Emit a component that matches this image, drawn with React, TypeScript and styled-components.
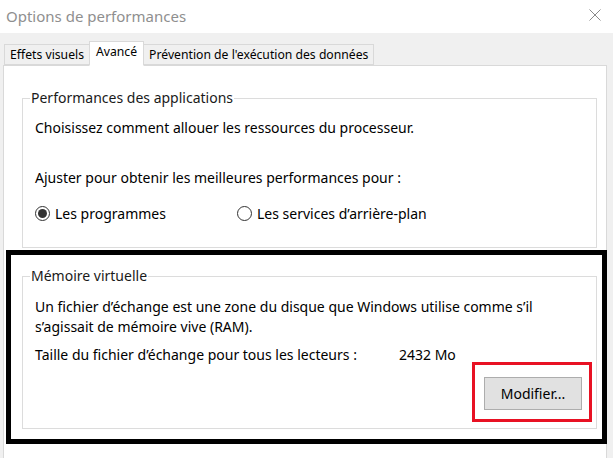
import React from 'react'
import styled, { createGlobalStyle } from 'styled-components'

const GlobalStyle = createGlobalStyle`
  html, body {
    margin: 0;
    padding: 0;
    background: #f0f0f0;
    overflow: hidden;
  }
  body {
    font-family: 'Noto Sans', 'Open Sans', sans-serif;
  }
`

const Window = styled.div`
  width: 613px;
  height: 458px;
  background: #f0f0f0;
  overflow: hidden;
`

const TitleBar = styled.div`
  height: 33px;
  background: #ffffff;
  display: flex;
  align-items: center;
  justify-content: space-between;
  padding: 0 12px 0 6px;
  box-sizing: border-box;
`

const Title = styled.span`
  font-size: 15px;
  color: #8f8f8f;
  margin-top: -2px;
`

const CloseButton = styled.span`
  display: flex;
  width: 12px;
  height: 12px;
  margin-top: -3px;
`

const Body = styled.div`
  padding: 8px 6px 0 3px;
`

const TabRow = styled.div`
  display: flex;
  align-items: flex-end;
  padding-left: 2px;
  height: 24px;
  position: relative;
  z-index: 1;
`

const Tab = styled.div<{ $active?: boolean }>`
  font-size: 12.2px;
  color: #000;
  background: ${({ $active }) => ($active ? '#ffffff' : '#f0f0f0')};
  border: 1px solid #d9d9d9;
  border-bottom: ${({ $active }) => ($active ? '1px solid #ffffff' : '1px solid #d9d9d9')};
  margin-left: -1px;
  height: ${({ $active }) => ($active ? '25px' : '21px')};
  margin-bottom: ${({ $active }) => ($active ? '-1px' : '0')};
  padding: 0 ${({ $active }) => ($active ? '6px' : '5px')};
  display: flex;
  align-items: ${({ $active }) => ($active ? 'flex-start' : 'center')};
  box-sizing: border-box;
  white-space: nowrap;
  line-height: 20px;
`

const Panel = styled.div`
  background: #ffffff;
  border: 1px solid #d9d9d9;
  margin-top: 0;
  padding: 22px 9px 20px 18px;
  height: 420px;
  box-sizing: border-box;
`

const Group = styled.fieldset`
  margin: 0;
  border: 1px solid #dcdcdc;
  padding: 0 0 0 12px;
  min-width: 0;
`

const Legend = styled.legend`
  font-size: 14px;
  color: #1a1a1a;
  padding: 0 1px;
  margin-left: -5px;
  line-height: 20px;
`

const Line = styled.div<{ $gap?: number }>`
  font-size: 14px;
  line-height: 20px;
  color: #000;
  margin-top: ${({ $gap }) => $gap ?? 0}px;
`

const RadioRow = styled.div`
  display: flex;
  align-items: center;
  margin-top: 15px;
  height: 20px;
  padding-bottom: 24px;
`

const RadioOption = styled.label<{ $width?: number }>`
  display: flex;
  align-items: center;
  gap: 5px;
  width: ${({ $width }) => ($width ? `${$width}px` : 'auto')};
  font-size: 14px;
  color: #000;
`

const RadioCircle = styled.span<{ $checked?: boolean }>`
  width: 15px;
  height: 15px;
  border-radius: 50%;
  border: 1px solid #333;
  box-sizing: border-box;
  display: flex;
  align-items: center;
  justify-content: center;
  background: #fff;
  &::after {
    content: '';
    width: 9px;
    height: 9px;
    border-radius: 50%;
    background: ${({ $checked }) => ($checked ? '#333' : 'transparent')};
  }
`

const Highlight = styled.div`
  border: 5px solid #000;
  margin: 2px -10px 0 -16px;
  padding: 11px 5px 10px 11px;
`

const SizeRow = styled.div`
  display: flex;
  font-size: 14px;
  line-height: 20px;
  color: #000;
  margin-top: 8px;
`

const SizeLabel = styled.span`
  width: 364px;
`

const ButtonRow = styled.div`
  display: flex;
  justify-content: flex-end;
  padding: 0 4px 6px 0;
  margin-top: -3px;
`

const RedMark = styled.div`
  border: 3px solid #e81123;
  padding: 12px 7px 9px 9px;
`

const Button = styled.button`
  width: 98px;
  height: 33px;
  background: #e1e1e1;
  border: 1px solid #adadad;
  font-family: inherit;
  font-size: 14px;
  color: #000;
  padding: 0;
`

const App: React.FC = () => {
  return (
    <Window>
      <GlobalStyle />
      <TitleBar>
        <Title>Options de performances</Title>
        <CloseButton>
          <svg width="12" height="12" viewBox="0 0 12 12">
            <path d="M0.5 0.5 L11.5 11.5 M11.5 0.5 L0.5 11.5" stroke="#8a8a8a" strokeWidth="1" fill="none" />
          </svg>
        </CloseButton>
      </TitleBar>
      <Body>
        <TabRow>
          <Tab>Effets visuels</Tab>
          <Tab $active>Avancé</Tab>
          <Tab>Prévention de l'exécution des données</Tab>
        </TabRow>
        <Panel>
          <Group>
            <Legend>Performances des applications</Legend>
            <Line $gap={10}>Choisissez comment allouer les ressources du processeur.</Line>
            <Line $gap={30}>Ajuster pour obtenir les meilleures performances pour :</Line>
            <RadioRow>
              <RadioOption $width={202}>
                <RadioCircle $checked />
                Les programmes
              </RadioOption>
              <RadioOption>
                <RadioCircle />
                Les services d’arrière-plan
              </RadioOption>
            </RadioRow>
          </Group>
          <Highlight>
            <Group>
              <Legend>Mémoire virtuelle</Legend>
              <Line $gap={11}>Un fichier d’échange est une zone du disque que Windows utilise comme s’il</Line>
              <Line>s’agissait de mémoire vive (RAM).</Line>
              <SizeRow>
                <SizeLabel>Taille du fichier d’échange pour tous les lecteurs :</SizeLabel>
                <span>2432 Mo</span>
              </SizeRow>
              <ButtonRow>
                <RedMark>
                  <Button>Modifier...</Button>
                </RedMark>
              </ButtonRow>
            </Group>
          </Highlight>
        </Panel>
      </Body>
    </Window>
  )
}

export default App
